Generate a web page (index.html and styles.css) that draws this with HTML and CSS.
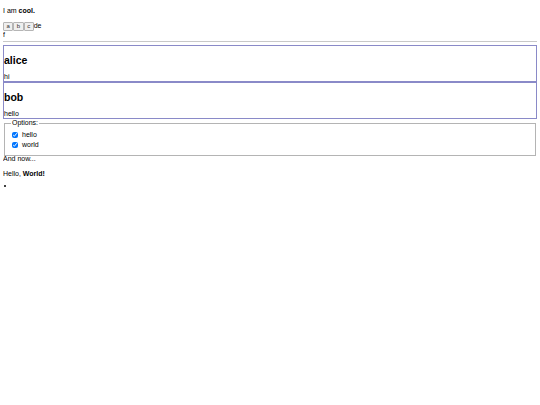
FILE: index.html
```html
<!DOCTYPE html>
<html>
<head>
<meta charset="utf-8">
<link rel="stylesheet" href="styles.css">
</head>
<body>
<p class="intro">I am <b>cool.</b></p>
<div class="btnrow"><button class="mini">a</button><button class="mini">b</button><button class="mini">c</button>de<br>f</div>
<hr class="rule">
<div class="card">
  <h2 class="name">alice</h2>
  <div class="msg">hi</div>
</div>
<div class="card">
  <h2 class="name">bob</h2>
  <div class="msg">hello</div>
</div>
<fieldset class="opts">
  <legend class="legend">Options:</legend>
  <label class="opt"><input type="checkbox" class="check" checked>hello</label>
  <label class="opt"><input type="checkbox" class="check" checked>world</label>
</fieldset>
<div class="after">And now...</div>
<p class="greet">Hello, <b>World!</b></p>
<ul class="list"><li class="item"></li></ul>
</body>
</html>
```
FILE: styles.css
```css
html, body {
  background: #fff;
}
body {
  margin: 3px;
  font-family: "Liberation Sans", Arial, sans-serif;
  font-size: 7px;
  line-height: 8px;
  color: #000;
}
.intro {
  margin: 4px 0 0 0;
}
.btnrow {
  margin-top: 7px;
}
.mini {
  font-family: "Liberation Sans", Arial, sans-serif;
  font-size: 6px;
  line-height: 7px;
  height: 9px;
  padding: 0 2.5px;
  margin: 0;
  border: 1px solid #b5b5b5;
  background: #efefef;
  color: #333;
  vertical-align: top;
  border-radius: 1px;
}
.rule {
  margin: 2px 0 3px 0;
  border: 0;
  border-top: 1px solid #c8c8c8;
  height: 0;
}
.card {
  border: 1px solid #8a8ac8;
}
.name {
  font-size: 10.5px;
  line-height: 12px;
  margin: 8px 0 7px 0;
}
.msg {
  line-height: 8px;
}
.opts {
  margin: 0 1px 0 1px;
  padding: 3px 4px 5px 4px;
  border: 1px solid #b4b4b4;
}
.legend {
  padding: 0 1px;
  margin-left: 2px;
}
.opt {
  display: flex;
  align-items: center;
  height: 10px;
  margin-left: 3px;
}
.check {
  width: 6px;
  height: 6px;
  margin: 0 4px 0 0;
}
.after {
  margin-top: -1px;
}
.greet {
  margin: 7px 0 0 0;
}
.list {
  margin: 4px 0 0 0;
  padding: 0 0 0 1px;
  list-style-position: inside;
}
.item {
  height: 8px;
}
```
